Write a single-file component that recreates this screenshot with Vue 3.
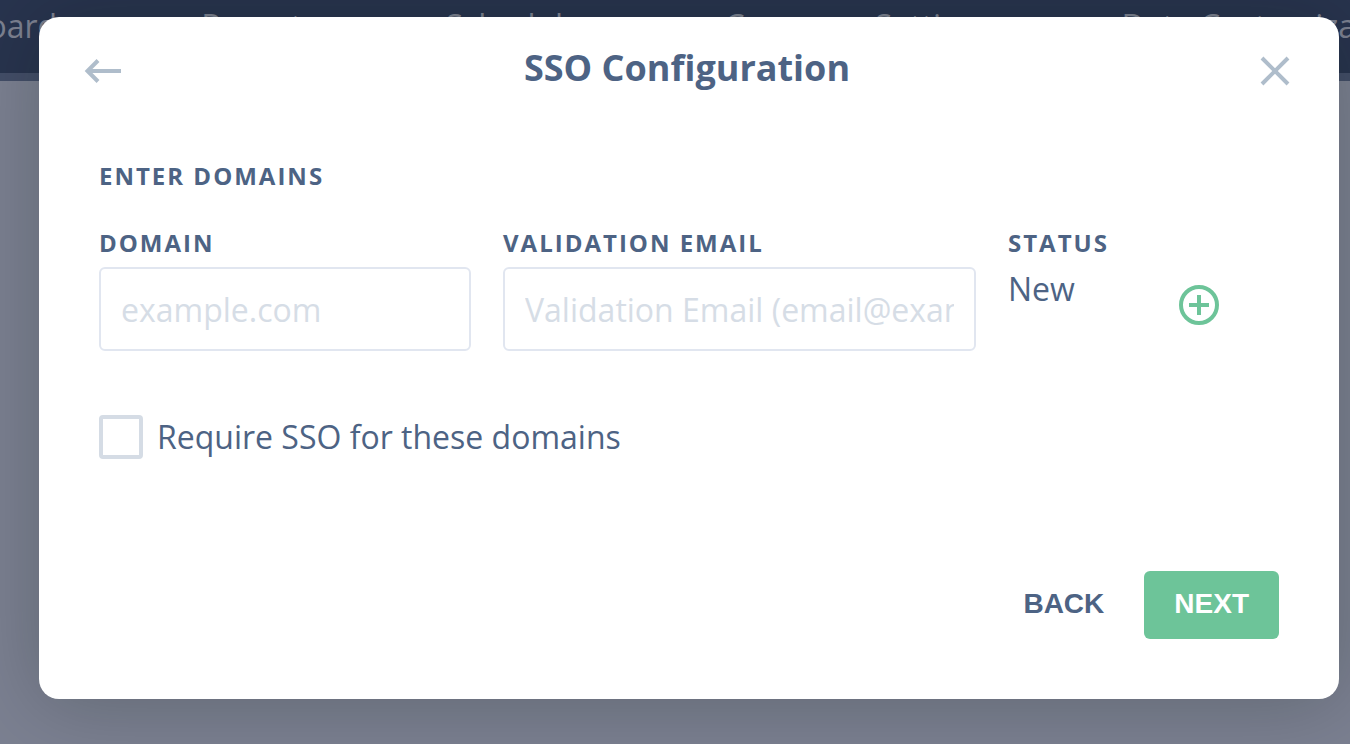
<script setup>
import { ref } from 'vue'

const navItems = ['Dashboard', 'Reports', 'Schedules', 'Company Settings', 'Data Customization']
const domain = ref('')
const email = ref('')
const requireSso = ref(false)
</script>

<template>
  <div class="page">
    <nav class="nav" aria-label="Main">
      <a v-for="item in navItems" :key="item" href="#">{{ item }}</a>
    </nav>

    <div class="overlay">
      <section class="modal" role="dialog" aria-labelledby="modal-title">
        <header class="header">
          <button class="icon-button" type="button" aria-label="Go back">
            <svg width="38" height="26" viewBox="0 0 38 26">
              <path d="M37 13H4M14 2.5L3.5 13L14 23.5" />
            </svg>
          </button>
          <h1 id="modal-title">SSO Configuration</h1>
          <button class="icon-button" type="button" aria-label="Close">
            <svg width="30" height="30" viewBox="0 0 30 30">
              <path d="M2 2L28 28M28 2L2 28" />
            </svg>
          </button>
        </header>

        <form class="body" @submit.prevent>
          <h2 class="caption">Enter Domains</h2>
          <div class="row">
            <div class="field">
              <label class="caption" for="domain">Domain</label>
              <input id="domain" v-model="domain" class="text" type="text" placeholder="example.com" />
            </div>
            <div class="field">
              <label class="caption" for="email">Validation Email</label>
              <input id="email" v-model="email" class="text" type="text" placeholder="Validation Email (email@example.com)" />
            </div>
            <div class="field">
              <span class="caption">Status</span>
              <span class="status">New</span>
            </div>
            <button class="add" type="button" aria-label="Add domain">
              <svg width="40" height="40" viewBox="0 0 40 40">
                <circle cx="20" cy="20" r="18" />
                <path d="M20 10V30M10 20H30" />
              </svg>
            </button>
          </div>

          <label class="check">
            <input v-model="requireSso" type="checkbox" />
            <span>Require SSO for these domains</span>
          </label>

          <footer class="actions">
            <button class="back" type="button">BACK</button>
            <button class="next" type="submit">NEXT</button>
          </footer>
        </form>
      </section>
    </div>
  </div>
</template>

<style>
body {
  background: #7b8091;
  overflow: hidden;
}
</style>

<style scoped>
* {
  box-sizing: border-box;
}

.page {
  position: relative;
  min-height: 100vh;
  font-family: "Open Sans", "Noto Sans", sans-serif;
  font-size: 32px;
  color: #4d6384;
  overflow: hidden;
}

.nav {
  display: flex;
  gap: 128px;
  height: 81px;
  padding-top: 4px;
  margin-left: -108px;
  background: #28344e;
  border-bottom: 8px solid #434e68;
  white-space: nowrap;
}

.nav a {
  color: #7c8190;
  line-height: 44px;
  text-decoration: none;
}

.nav a:first-child {
  margin-right: 16px;
}

.overlay {
  position: absolute;
  inset: 0;
  padding: 17px 11px 45px 39px;
}

.modal {
  background: #fff;
  border-radius: 20px;
  box-shadow: 0 4px 80px rgba(0, 15, 0, 0.22);
}

.header {
  display: flex;
  align-items: center;
  justify-content: space-between;
  padding: 25px 49px 0 45px;
}

.header h1 {
  margin: 0;
  font-size: 36px;
  line-height: 52px;
  font-weight: 700;
}

button {
  border: 0;
  padding: 0;
  background: none;
  cursor: pointer;
}

.icon-button {
  display: flex;
  width: 38px;
  padding-top: 6px;
}

.icon-button:last-child {
  justify-content: flex-end;
}

svg {
  display: block;
  fill: none;
  stroke: #afbdcb;
  stroke-width: 4;
}

.body {
  padding: 65px 60px 60px;
}

.caption {
  display: block;
  margin: 0;
  font-size: 24px;
  line-height: 34px;
  font-weight: 700;
  letter-spacing: 2px;
  text-transform: uppercase;
  white-space: nowrap;
}

.row {
  display: grid;
  grid-template-columns: 372fr 473fr 139fr 100fr;
  gap: 32px;
  margin-top: 33px;
}

.field {
  display: flex;
  flex-direction: column;
  min-width: 0;
}

.text {
  width: 100%;
  height: 84px;
  margin-top: 7px;
  padding: 0 20px;
  border: 2px solid #e1e6f0;
  border-radius: 6px;
  background: #fff;
  font: inherit;
  color: inherit;
}

.text::placeholder {
  color: #d6dde6;
  opacity: 1;
}

.status {
  line-height: 44px;
  margin-top: 7px;
}

.add {
  align-self: start;
  justify-self: start;
  margin-top: 59px;
}

.add svg {
  stroke: #6dc499;
}

.check {
  display: flex;
  align-items: center;
  gap: 14px;
  width: fit-content;
  margin-top: 64px;
  line-height: 44px;
}

.check input {
  appearance: none;
  width: 44px;
  height: 44px;
  margin: 0;
  border: 4px solid #d5dce5;
  border-radius: 4px;
}

.check input:checked {
  background: #6dc499;
}

.actions {
  display: flex;
  justify-content: flex-end;
  gap: 40px;
  margin-top: 112px;
}

.actions button {
  height: 68px;
  padding-bottom: 2px;
  font-family: "Liberation Sans", Arial, sans-serif;
  font-size: 28px;
  font-weight: 700;
  color: #4d6384;
}

.actions .next {
  padding-left: 30px;
  padding-right: 30px;
  border-radius: 6px;
  background: #6dc499;
  color: #fff;
}
</style>
